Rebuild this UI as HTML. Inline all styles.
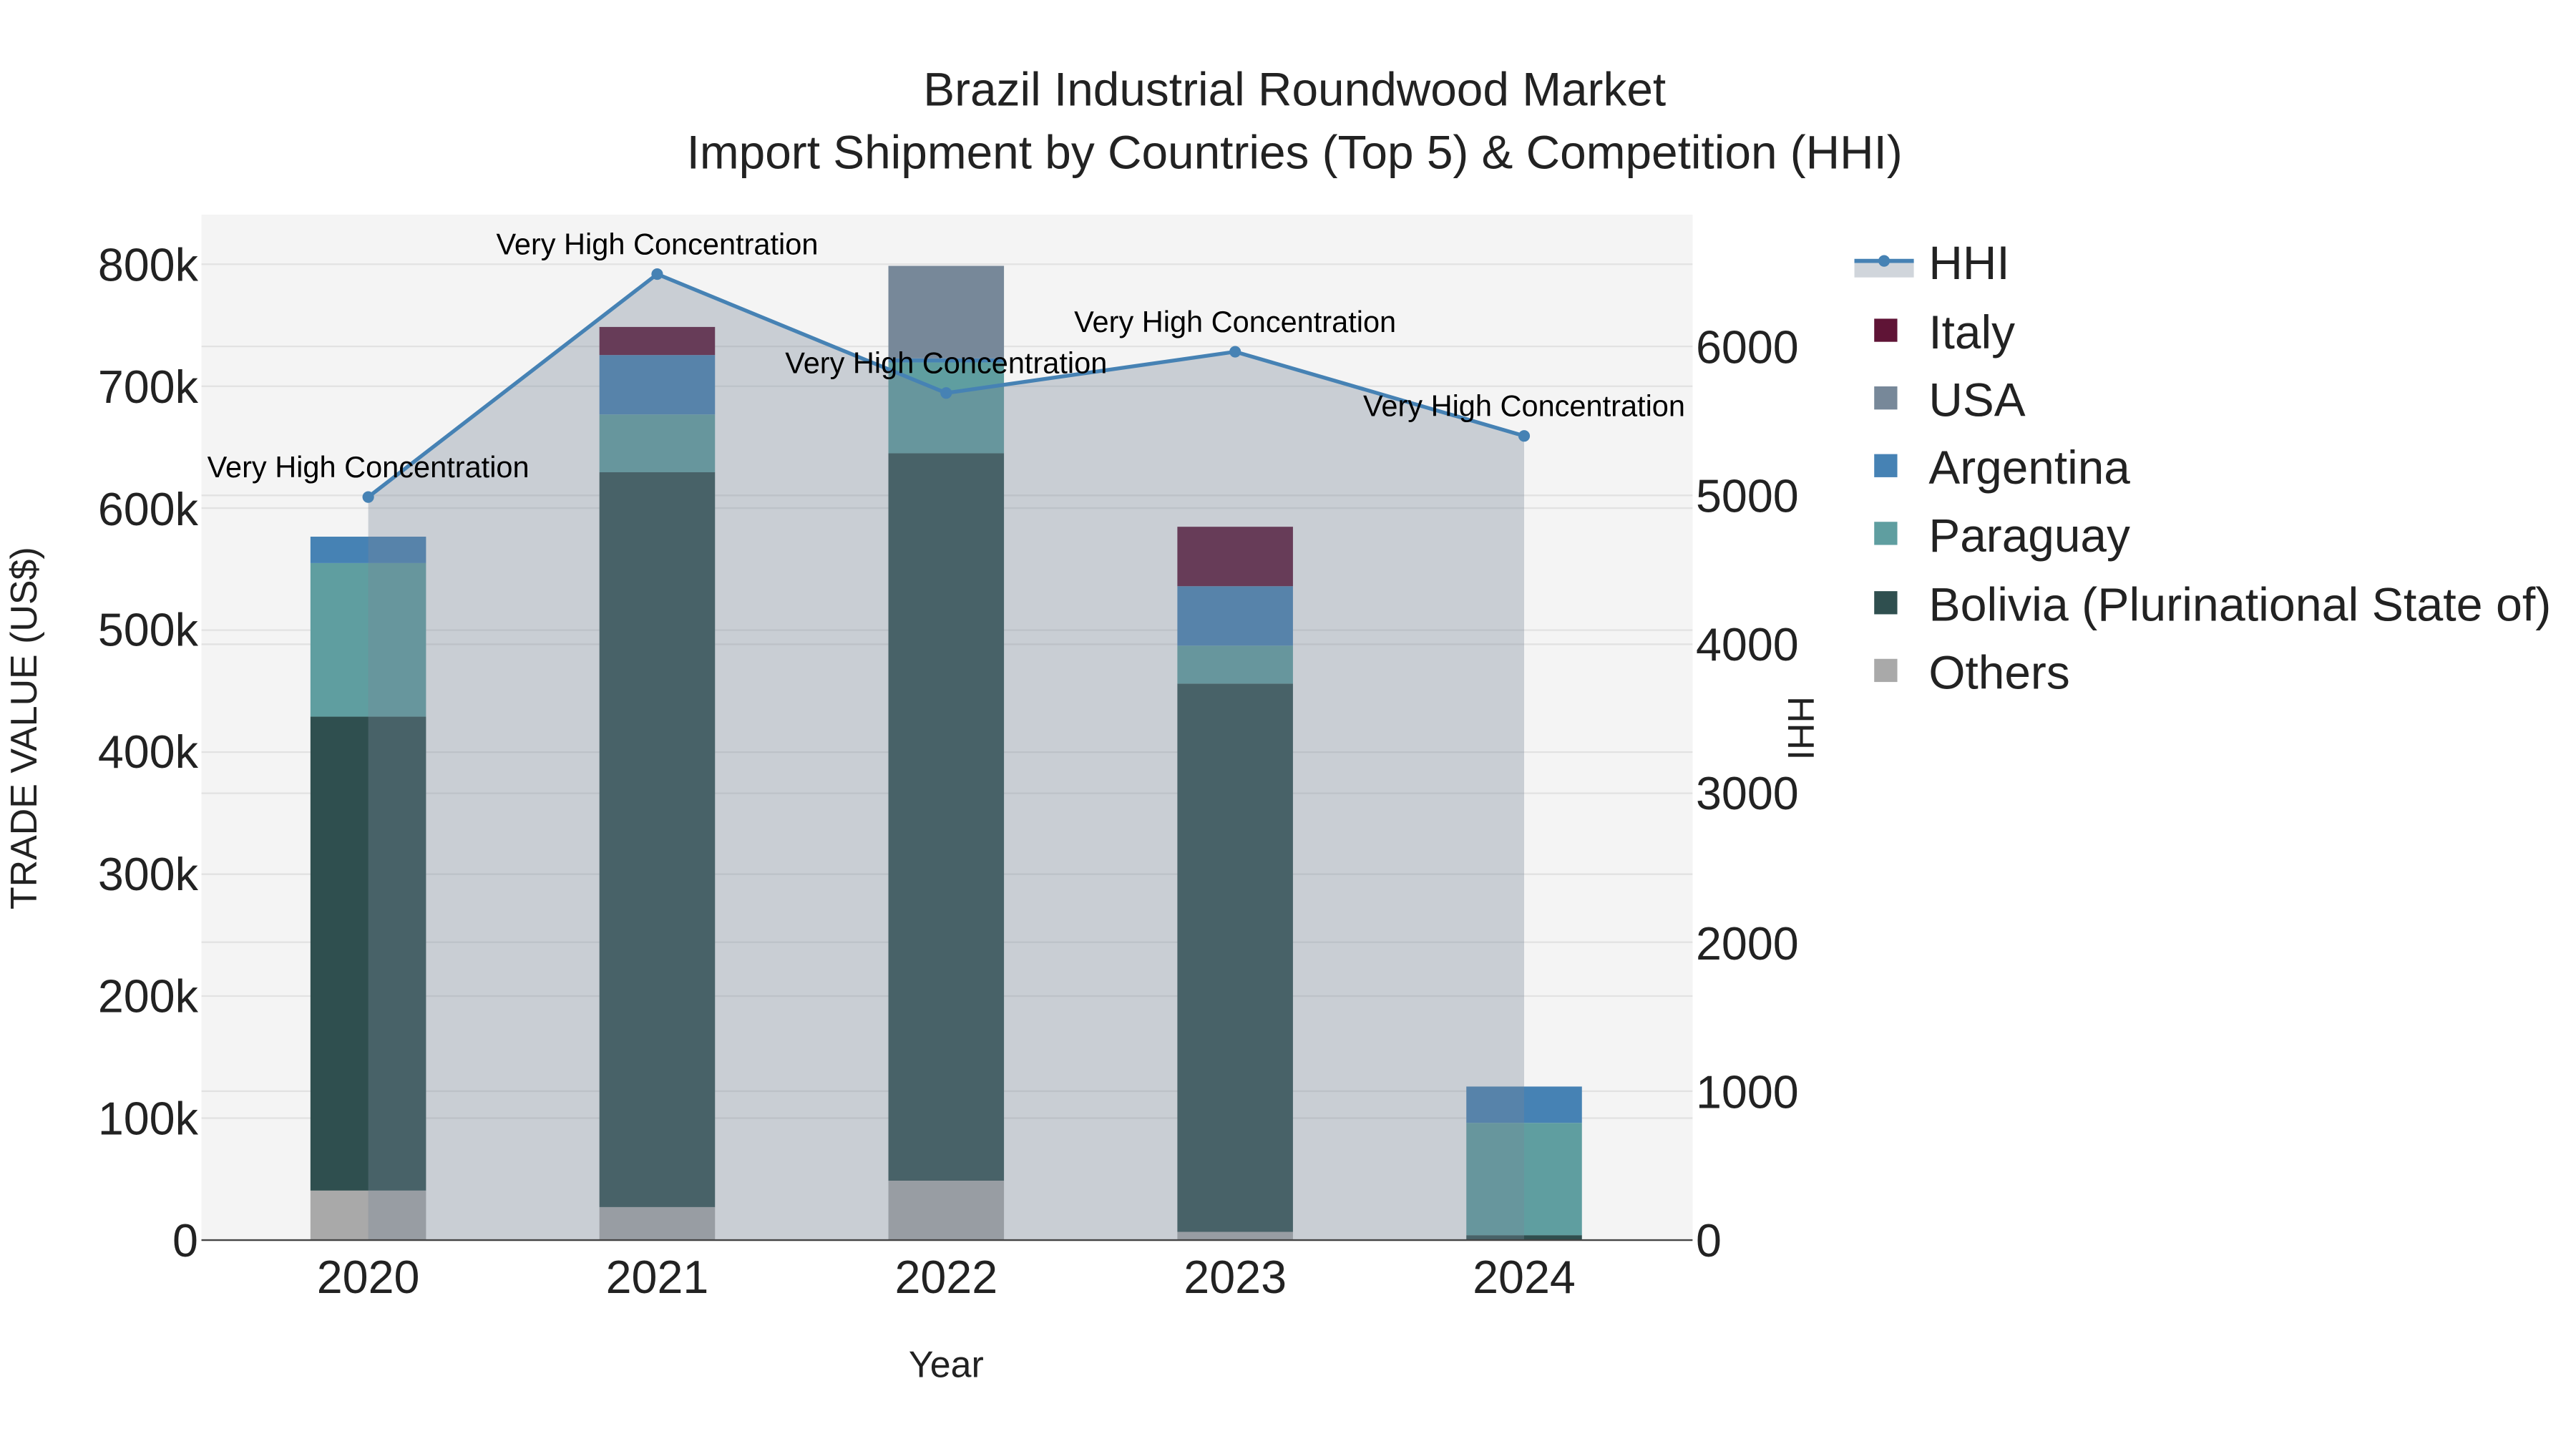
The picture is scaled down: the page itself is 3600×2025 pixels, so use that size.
<!DOCTYPE html>
<html><head><meta charset="utf-8"><style>
html,body{margin:0;padding:0;background:#fff;}
svg{display:block;font-family:"Liberation Sans",sans-serif;}
</style></head><body>
<svg width="3600" height="2025" viewBox="0 0 1560 877.5" xmlns="http://www.w3.org/2000/svg">
<rect x="0" y="0" width="1560" height="877.5" fill="#fff"/>
<rect x="122" y="130" width="903" height="621" fill="#f4f4f4"/>
<g stroke="#e2e2e2" stroke-width="1">
<line x1="122" x2="1025" y1="677.1" y2="677.1"/><line x1="122" x2="1025" y1="603.2" y2="603.2"/>
<line x1="122" x2="1025" y1="529.4" y2="529.4"/><line x1="122" x2="1025" y1="455.5" y2="455.5"/>
<line x1="122" x2="1025" y1="381.6" y2="381.6"/><line x1="122" x2="1025" y1="307.7" y2="307.7"/>
<line x1="122" x2="1025" y1="233.9" y2="233.9"/><line x1="122" x2="1025" y1="160" y2="160"/>
<line x1="122" x2="1025" y1="660.8" y2="660.8"/><line x1="122" x2="1025" y1="570.6" y2="570.6"/>
<line x1="122" x2="1025" y1="480.4" y2="480.4"/><line x1="122" x2="1025" y1="390.2" y2="390.2"/>
<line x1="122" x2="1025" y1="300" y2="300"/><line x1="122" x2="1025" y1="209.8" y2="209.8"/>
</g>
<rect x="188" y="721" width="70" height="30" fill="#a9a9a9"/>
<rect x="188" y="434" width="70" height="287" fill="#2f4f4f"/>
<rect x="188" y="341" width="70" height="93" fill="#5f9ea0"/>
<rect x="188" y="325" width="70" height="16" fill="#4682b4"/>
<rect x="363" y="731" width="70" height="20" fill="#a9a9a9"/>
<rect x="363" y="286" width="70" height="445" fill="#2f4f4f"/>
<rect x="363" y="251" width="70" height="35" fill="#5f9ea0"/>
<rect x="363" y="215" width="70" height="36" fill="#4682b4"/>
<rect x="363" y="198" width="70" height="17" fill="#5f1436"/>
<rect x="538" y="715" width="70" height="36" fill="#a9a9a9"/>
<rect x="538" y="274.5" width="70" height="440.5" fill="#2f4f4f"/>
<rect x="538" y="219.5" width="70" height="55" fill="#5f9ea0"/>
<rect x="538" y="217" width="70" height="2.5" fill="#4682b4"/>
<rect x="538" y="161" width="70" height="56" fill="#778899"/>
<rect x="713" y="746" width="70" height="5" fill="#a9a9a9"/>
<rect x="713" y="414" width="70" height="332" fill="#2f4f4f"/>
<rect x="713" y="391" width="70" height="23" fill="#5f9ea0"/>
<rect x="713" y="355" width="70" height="36" fill="#4682b4"/>
<rect x="713" y="319" width="70" height="36" fill="#5f1436"/>
<rect x="888" y="748" width="70" height="3" fill="#2f4f4f"/>
<rect x="888" y="680" width="70" height="68" fill="#5f9ea0"/>
<rect x="888" y="658" width="70" height="22" fill="#4682b4"/>
<polygon points="223,751 223,301 398,166 573,238 748,213 923,264 923,751" fill="rgba(119,136,153,0.35)"/>
<polyline points="223,301 398,166 573,238 748,213 923,264" fill="none" stroke="#4682b4" stroke-width="2.3"/>
<g fill="#4682b4"><circle cx="223" cy="301" r="3.5"/><circle cx="398" cy="166" r="3.5"/><circle cx="573" cy="238" r="3.5"/><circle cx="748" cy="213" r="3.5"/><circle cx="923" cy="264" r="3.5"/></g>
<line x1="122" x2="1025" y1="751" y2="751" stroke="#444" stroke-width="1"/>
<g font-size="18" fill="#000" text-anchor="middle">
<text x="223" y="289">Very High Concentration</text>
<text x="398" y="154">Very High Concentration</text>
<text x="573" y="226">Very High Concentration</text>
<text x="748" y="201">Very High Concentration</text>
<text x="923" y="252">Very High Concentration</text>
</g>
<g font-size="28" fill="#222" text-anchor="end">
<text x="120" y="761">0</text><text x="120" y="687">100k</text><text x="120" y="613">200k</text>
<text x="120" y="539">300k</text><text x="120" y="465">400k</text><text x="120" y="391">500k</text>
<text x="120" y="318">600k</text><text x="120" y="244">700k</text><text x="120" y="170">800k</text>
</g>
<g font-size="28" fill="#222" text-anchor="start">
<text x="1027" y="761">0</text><text x="1027" y="671">1000</text><text x="1027" y="581">2000</text>
<text x="1027" y="490">3000</text><text x="1027" y="400">4000</text><text x="1027" y="310">5000</text>
<text x="1027" y="220">6000</text>
</g>
<g font-size="28" fill="#222" text-anchor="middle">
<text x="223" y="783">2020</text><text x="398" y="783">2021</text><text x="573" y="783">2022</text>
<text x="748" y="783">2023</text><text x="923" y="783">2024</text>
</g>
<text x="573" y="834" font-size="22.5" fill="#222" text-anchor="middle">Year</text>
<text transform="translate(22,441) rotate(-90)" font-size="22.5" fill="#222" text-anchor="middle">TRADE VALUE (US$)</text>
<text transform="translate(1083,441) rotate(90)" font-size="22.5" fill="#222" text-anchor="middle">HHI</text>
<g font-size="28.5" fill="#222" text-anchor="middle">
<text x="784" y="64">Brazil Industrial Roundwood Market</text>
<text x="784" y="102">Import Shipment by Countries (Top 5) &amp; Competition (HHI)</text>
</g>
<rect x="1123" y="158" width="36" height="10" fill="rgba(119,136,153,0.35)"/>
<line x1="1123" x2="1159" y1="158" y2="158" stroke="#4682b4" stroke-width="2.5"/>
<circle cx="1141" cy="158" r="3.5" fill="#4682b4"/>
<rect x="1135" y="193" width="14" height="14" fill="#5f1436"/>
<rect x="1135" y="234" width="14" height="14" fill="#778899"/>
<rect x="1135" y="275" width="14" height="14" fill="#4682b4"/>
<rect x="1135" y="316" width="14" height="14" fill="#5f9ea0"/>
<rect x="1135" y="358" width="14" height="14" fill="#2f4f4f"/>
<rect x="1135" y="399" width="14" height="14" fill="#a9a9a9"/>
<g font-size="28.5" fill="#222">
<text x="1168" y="169">HHI</text>
<text x="1168" y="211">Italy</text>
<text x="1168" y="252">USA</text>
<text x="1168" y="293">Argentina</text>
<text x="1168" y="334">Paraguay</text>
<text x="1168" y="376" textLength="377" lengthAdjust="spacingAndGlyphs">Bolivia (Plurinational State of)</text>
<text x="1168" y="417">Others</text>
</g>
</svg>
</body></html>
